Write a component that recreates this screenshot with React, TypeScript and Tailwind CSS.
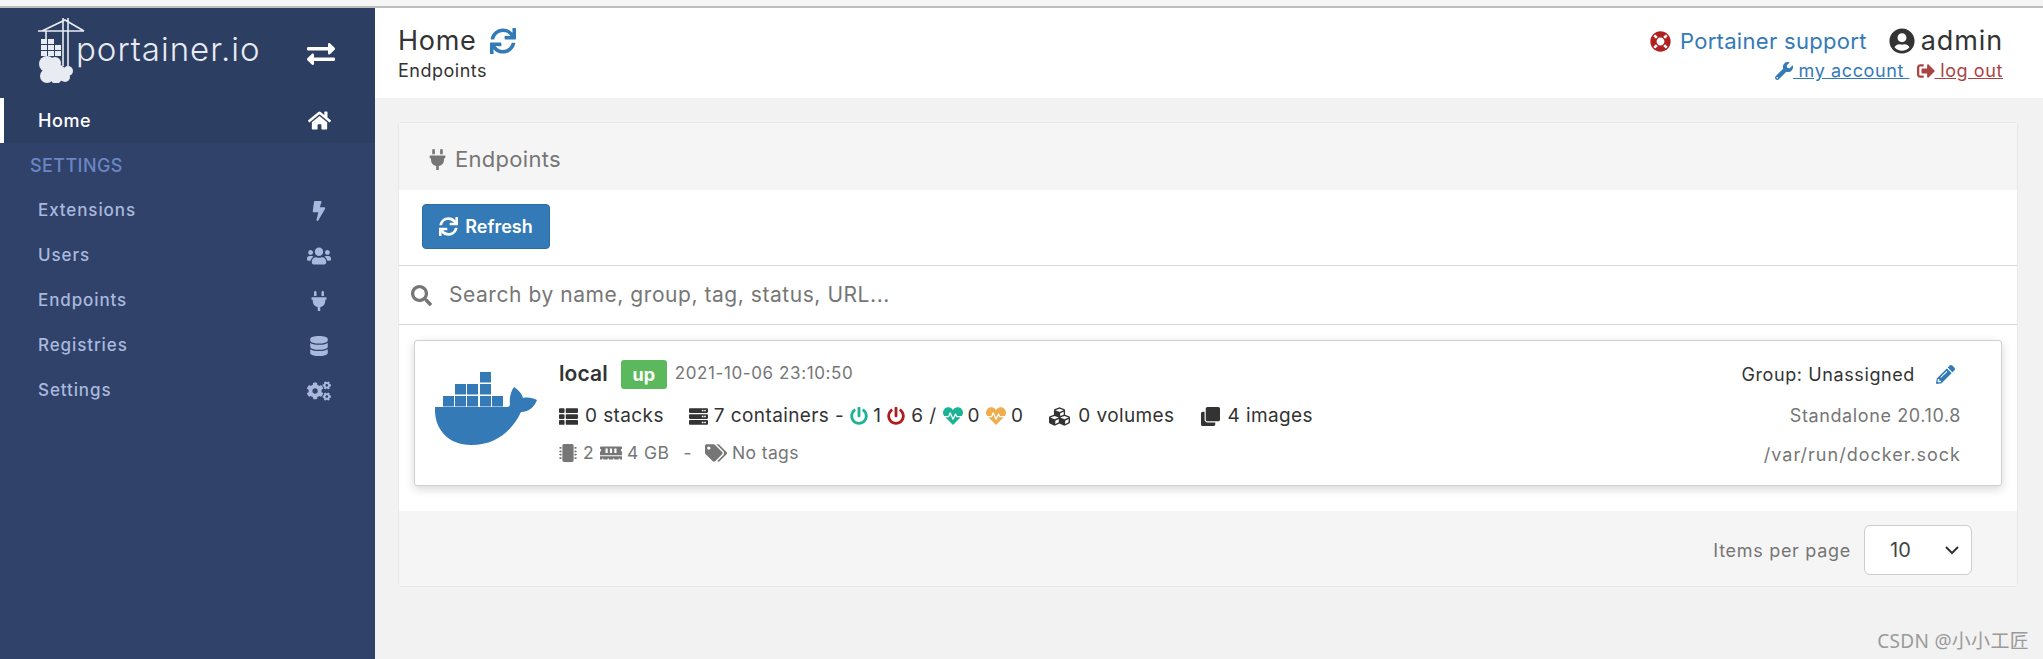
import React from "react";
import {
  FaExchangeAlt, FaHome, FaBolt, FaUsers, FaPlug, FaDatabase, FaCogs, FaSync, FaLifeRing, FaUserCircle,
  FaWrench, FaSignOutAlt, FaSearch, FaThList, FaServer, FaPowerOff, FaHeartbeat, FaCubes, FaClone,
  FaMicrochip, FaMemory, FaTags, FaPencilAlt,
} from "react-icons/fa";

const navItems = [
  { label: "Extensions", Icon: FaBolt, size: "text-[20px]" },
  { label: "Users", Icon: FaUsers, size: "text-[24px]" },
  { label: "Endpoints", Icon: FaPlug, size: "text-[20px]" },
  { label: "Registries", Icon: FaDatabase, size: "text-[20px]" },
  { label: "Settings", Icon: FaCogs, size: "text-[24px]" },
];

function Crane() {
  return (
    <svg width="50" height="66" viewBox="0 0 50 66" className="shrink-0">
      <g stroke="#e8ebf2" strokeWidth="1.6" fill="none">
        <path d="M1 14h46M26 1v48M31 1v48M5 14L28 3l19 11M9 14v8" />
      </g>
      <g fill="#e8ebf2">
        <rect x="4" y="22" width="6" height="5" /><rect x="11" y="22" width="6" height="5" /><rect x="18" y="28" width="6" height="5" />
        <rect x="4" y="28" width="6" height="5" /><rect x="11" y="28" width="6" height="5" /><rect x="4" y="34" width="6" height="5" /><rect x="11" y="34" width="6" height="5" /><rect x="18" y="34" width="6" height="5" />
        <circle cx="10" cy="47" r="8" /><circle cx="18" cy="46" r="6" />
        <circle cx="10" cy="59" r="7" /><circle cx="20" cy="56" r="9" /><circle cx="28" cy="60" r="5" /><circle cx="31" cy="54" r="5" /><circle cx="19" cy="62" r="5" />
      </g>
    </svg>
  );
}

function DockerLogo() {
  const boxes = [
    [45, 0], [20, 12], [32, 12], [45, 12], [8, 24], [20, 24], [32, 24], [45, 24], [57, 24],
  ];
  return (
    <svg width="103" height="74" viewBox="0 0 103 74" className="shrink-0">
      <g fill="#337ab7">
        {boxes.map(([x, y], i) => (
          <rect key={i} x={x} y={y} width="11" height="10.5" />
        ))}
        <path d="M0 35H72C74 35 75 34 75 32C74 26 76 19 79 15C84 18 87 22 88 26C93 25 98 26 102 28C99 36 93 40 86 40C78 57 62 73 36 73C14 73 0 58 0 38Z" />
      </g>
    </svg>
  );
}

export default function App() {
  return (
    <div className="h-[659px] w-full flex flex-col overflow-hidden relative bg-[#f2f2f2] text-[#333] font-['Inter','Liberation_Sans',sans-serif]">
      <div className="h-[8px] bg-[#f5f5f5] border-b-2 border-[#bdbdbd]" />
      <div className="flex flex-1 min-h-0">
        <aside className="w-[375px] bg-[#30426a] shrink-0">
          <div className="bg-[#2d3e63] h-[90px] flex items-start pl-[37px] pr-[40px] pt-[9px]">
            <Crane />
            <span className="text-[#e8ebf2] text-[33px] font-light tracking-[1px] leading-[40px] mt-[12px] ml-[-11px] w-[196px]">portainer.io</span>
            <FaExchangeAlt className="text-white text-[28px] ml-auto mt-[23px]" />
          </div>
          <div className="bg-[#2d3e63] h-[45px] border-l-4 border-white flex items-center pl-[34px] pr-[44px] pb-[1px] text-white text-[18px] font-medium tracking-[0.6px] justify-between">
            <span>Home</span>
            <FaHome className="text-[23px]" />
          </div>
          <div className="h-[45px] pl-[30px] flex items-center text-[#6a86c5] text-[18px] font-medium tracking-[0.4px]">SETTINGS</div>
          {navItems.map(({ label, Icon, size }) => (
            <div key={label} className="h-[45px] flex items-center justify-between pl-[38px] pr-[44px] text-[#a9b9dd] text-[17px] font-medium tracking-[0.9px]">
              <span>{label}</span>
              <span className="w-[24px] flex justify-center"><Icon className={size} /></span>
            </div>
          ))}
        </aside>
        <main className="flex-1 min-w-0 flex flex-col">
          <header className="h-[90px] bg-white flex justify-between pl-[23px] pr-[40px] pt-[15px] shrink-0">
            <div>
              <div className="flex items-center text-[27px] leading-[36px] text-[#333] tracking-[0.7px]">
                Home
                <FaSync className="text-[#337ab7] text-[26px] ml-[14px]" />
              </div>
              <div className="text-[18px] leading-[24px] text-[#333] tracking-[0.5px]">Endpoints</div>
            </div>
            <div className="flex flex-col items-end">
              <div className="flex items-center leading-[36px] h-[36px] text-[22px]">
                <FaLifeRing className="text-[#b02020] text-[21px]" />
                <span className="text-[#337ab7] ml-[9px] tracking-[0.3px]">Portainer support</span>
                <FaUserCircle className="text-[#333] text-[26px] ml-[22px]" />
                <span className="text-[#333] ml-[6px] text-[27px] tracking-[0.9px]">admin</span>
              </div>
              <div className="flex items-center text-[18px] leading-[24px] tracking-[0.6px]">
                <FaWrench className="text-[#337ab7] text-[18px]" />
                <span className="text-[#337ab7] underline whitespace-pre"> my account </span>
                <FaSignOutAlt className="text-[#a94442] text-[18px] ml-[7px]" />
                <span className="text-[#a94442] underline whitespace-pre"> log out</span>
              </div>
            </div>
          </header>
          <div className="px-[23px] pt-[24px] pr-[25px]">
            <section className="bg-white border border-[#e8e8e8] rounded-[3px] h-[465px] flex flex-col">
              <div className="h-[67px] bg-[#f5f5f5] flex items-center pl-[28px] pt-[6px] text-[#767676] text-[22px] tracking-[0.3px]">
                <FaPlug className="text-[21px] mr-[7px]" />
                Endpoints
              </div>
              <div className="h-[76px] border-b border-[#d8d8d8] pl-[23px] pt-[14px]">
                <button className="h-[45px] w-[128px] bg-[#337ab7] border border-[#2e6da4] rounded-[4px] text-white text-[18px] font-semibold flex items-center justify-center gap-[7px]">
                  <FaSync className="text-[19px]" />
                  Refresh
                </button>
              </div>
              <div className="h-[59px] border-b border-[#d8d8d8] flex items-center pl-[12px] text-[#767676] text-[21px] tracking-[0.55px]">
                <FaSearch className="text-[21px] mr-[17px]" />
                Search by name, group, tag, status, URL...
              </div>
              <div className="flex-1 px-[15px] pt-[15px]">
                <div className="h-[146px] w-full border border-[#d0d0d0] rounded-[3px] bg-white shadow-[0_3px_10px_rgba(0,0,0,0.16)] flex pl-[20px] pr-[40px]">
                  <div className="pt-[31px]"><DockerLogo /></div>
                  <div className="ml-[21px] flex-1 pt-[18px]">
                    <div className="flex items-center h-[30px]">
                      <span className="text-[21px] font-semibold text-[#333] tracking-[0.1px]">local</span>
                      <span className="ml-[13px] h-[29px] w-[46px] bg-[#5cb85c] rounded-[3px] text-white text-[18px] font-bold flex items-center justify-center">up</span>
                      <span className="ml-[8px] text-[17px] text-[#767676] tracking-[0.6px]">2021-10-06 23:10:50</span>
                    </div>
                    <div className="flex items-center h-[30px] mt-[12px] text-[19px] text-[#333] tracking-[0.4px]">
                      <FaThList className="text-[19px]" /><span className="ml-[7px]">0 stacks</span>
                      <FaServer className="text-[19px] ml-[25px]" /><span className="ml-[6px]">7 containers -</span>
                      <FaPowerOff className="text-[#1ab394] text-[18px] ml-[6px]" /><span className="ml-[5px]">1</span>
                      <FaPowerOff className="text-[#b01c1c] text-[18px] ml-[6px]" /><span className="ml-[6px]">6 /</span>
                      <FaHeartbeat className="text-[#1ab394] text-[20px] ml-[6px]" /><span className="ml-[5px]">0</span>
                      <FaHeartbeat className="text-[#f0ad4e] text-[20px] ml-[6px]" /><span className="ml-[5px]">0</span>
                      <FaCubes className="text-[21px] ml-[26px]" /><span className="ml-[8px]">0 volumes</span>
                      <FaClone className="text-[19px] ml-[26px]" /><span className="ml-[8px]">4 images</span>
                    </div>
                    <div className="flex items-center h-[24px] mt-[10px] text-[17.500px] text-[#767676] tracking-[0.4px]">
                      <FaMicrochip className="text-[18px]" /><span className="ml-[6px]">2</span>
                      <FaMemory className="text-[22px] ml-[6px]" /><span className="ml-[5px]">4 GB</span>
                      <span className="ml-[14px]">-</span>
                      <FaTags className="text-[22px] ml-[13px]" /><span className="ml-[5px]">No tags</span>
                    </div>
                  </div>
                  <div className="flex flex-col items-end pt-[18px] text-[18px] tracking-[0.6px]">
                    <div className="h-[30px] flex items-center text-[#333] mr-[6px]">
                      Group: Unassigned
                      <FaPencilAlt className="text-[#337ab7] text-[19px] ml-[21px]" />
                    </div>
                    <div className="h-[30px] flex items-center mt-[11px] text-[#767676]">Standalone 20.10.8</div>
                    <div className="h-[30px] flex items-center mt-[9px] text-[#767676] tracking-[1px]">/var/run/docker.sock</div>
                  </div>
                </div>
              </div>
              <div className="h-[75px] bg-[#f5f5f5] flex items-center justify-end pr-[45px] pt-[3px]">
                <span className="text-[#767676] text-[18px] tracking-[0.7px] mr-[13px]">Items per page</span>
                <div className="w-[108px] h-[50px] bg-white border border-[#cccccc] rounded-[6px] flex items-center justify-between pl-[25px] pr-[12px] text-[20px] text-[#444]">
                  10
                  <svg width="14" height="9" viewBox="0 0 14 9" fill="none" stroke="#333" strokeWidth="2"><path d="M1 1l6 6 6-6" /></svg>
                </div>
              </div>
            </section>
          </div>
        </main>
      </div>
      <div className="absolute right-[14px] top-[630px] text-[#9a9a9a] text-[19px] leading-[22px] tracking-[0.3px] font-['Noto_Sans','Noto_Sans_CJK_SC',sans-serif]">CSDN @小小工匠</div>
    </div>
  );
}
